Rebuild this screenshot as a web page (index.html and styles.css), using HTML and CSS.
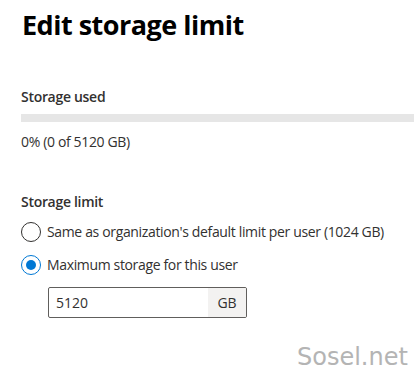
FILE: index.html
```html
<!DOCTYPE html>
<html>
<head>
<meta charset="utf-8">
<link rel="stylesheet" href="styles.css">
</head>
<body>
<div class="page">
  <h1 class="title">Edit storage limit</h1>
  <section class="used">
    <div class="label">Storage used</div>
    <div class="bar"><div class="bar-fill" style="width:0%"></div></div>
    <div class="usage">0% (0 of 5120 GB)</div>
  </section>
  <section class="limit">
    <div class="label">Storage limit</div>
    <div class="options">
      <label class="option">
        <span class="radio"></span>
        <span class="option-text">Same as organization's default limit per user (1024 GB)</span>
      </label>
      <label class="option">
        <span class="radio checked"></span>
        <span class="option-text">Maximum storage for this user</span>
      </label>
    </div>
    <div class="field">
      <span class="field-value">5120</span>
      <span class="field-suffix">GB</span>
    </div>
  </section>
</div>
<div class="watermark">Sosel.net</div>
</body>
</html>
```
FILE: styles.css
```css
html, body {
  margin: 0;
  padding: 0;
  background: #ffffff;
}
body {
  width: 414px;
  height: 381px;
  overflow: hidden;
  position: relative;
  font-family: "Open Sans", "Noto Sans", sans-serif;
  color: #323130;
}
.page {
  padding: 7px 0 0 21px;
}
.title {
  margin: 0 0 0 1px;
  font-size: 27px;
  line-height: 36px;
  font-weight: 700;
  color: #000000;
  letter-spacing: -0.5px;
}
.label {
  font-size: 14px;
  line-height: 20px;
  font-weight: 600;
  color: #323130;
  letter-spacing: -0.3px;
}
.used {
  margin-top: 44px;
}
.bar {
  margin-top: 7px;
  height: 8px;
  background: #e6e6e6;
}
.bar-fill {
  height: 100%;
  background: #0078d4;
}
.usage {
  margin-top: 10px;
  font-size: 14px;
  line-height: 20px;
  letter-spacing: -0.35px;
}
.limit {
  margin-top: 40px;
}
.options {
  display: flex;
  flex-direction: column;
  gap: 13px;
  margin-top: 10px;
}
.option {
  display: flex;
  align-items: center;
  gap: 6px;
  height: 20px;
  font-size: 14px;
  line-height: 20px;
  letter-spacing: -0.35px;
}
.radio {
  box-sizing: border-box;
  width: 20px;
  height: 20px;
  border: 1px solid #323130;
  border-radius: 50%;
  flex: none;
  display: flex;
  align-items: center;
  justify-content: center;
}
.radio.checked {
  border-color: #0078d4;
}
.radio.checked::after {
  content: "";
  width: 10px;
  height: 10px;
  border-radius: 50%;
  background: #0078d4;
}
.field {
  box-sizing: border-box;
  margin: 12px 0 0 27px;
  width: 199px;
  height: 31px;
  border: 1px solid #605e5c;
  border-radius: 2px;
  display: flex;
  font-size: 14px;
  overflow: hidden;
}
.field-value {
  flex: 1;
  padding-left: 7px;
  line-height: 29px;
}
.field-suffix {
  width: 38px;
  background: #f3f2f1;
  text-align: center;
  line-height: 29px;
}
.watermark {
  position: absolute;
  left: 297px;
  top: 342px;
  font-family: "DejaVu Sans", sans-serif;
  font-size: 24px;
  line-height: 30px;
  color: #b4b4b4;
}
```
